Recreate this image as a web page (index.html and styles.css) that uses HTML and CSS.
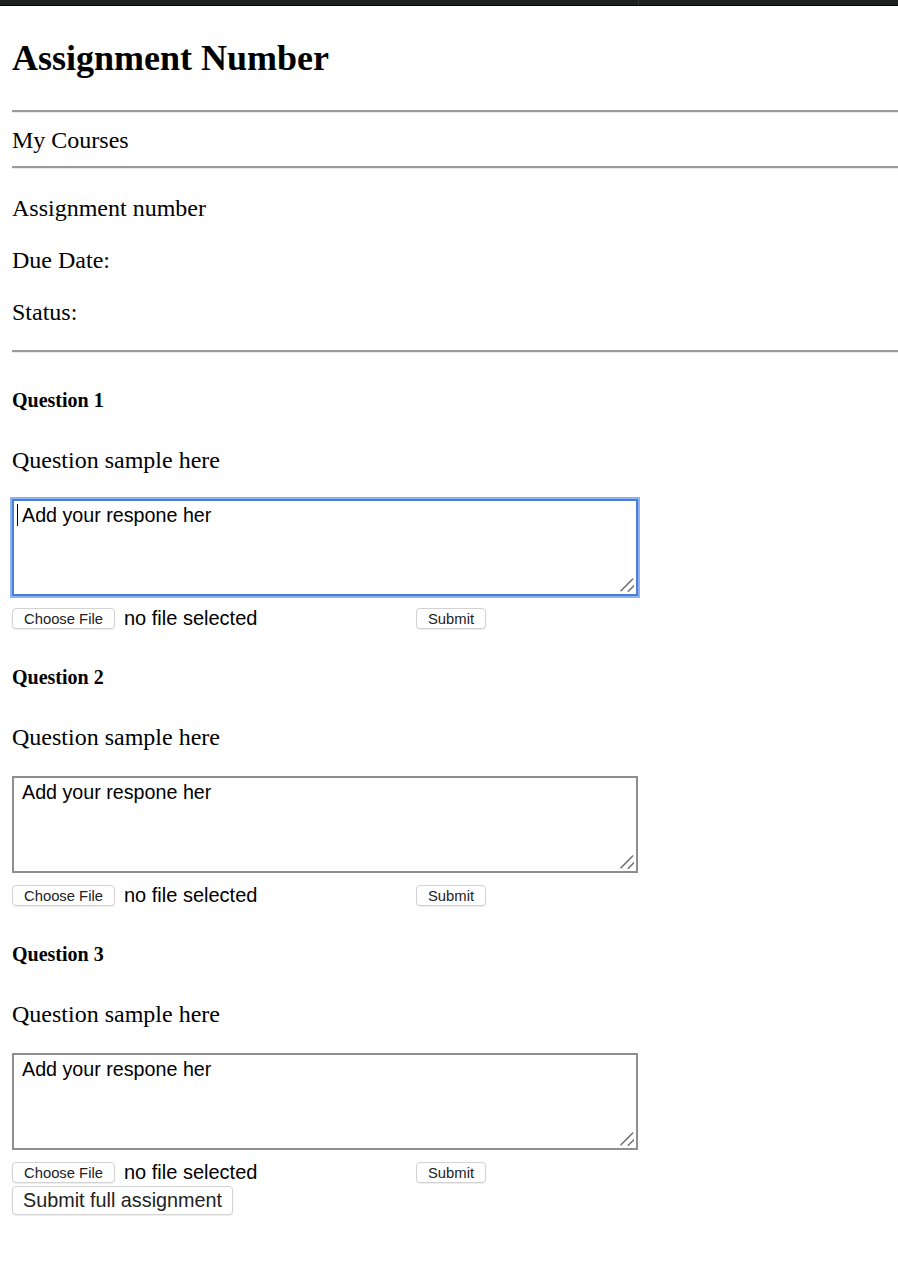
FILE: index.html
```html
<!DOCTYPE html>
<html lang="en">
<head>
<meta charset="utf-8">
<title>Assignment Number</title>
<link rel="stylesheet" href="styles.css">
</head>
<body>
<div class="topbar"><div class="topbar-left"></div><div class="topbar-right"></div></div>
<main class="page">
  <h1 class="title">Assignment Number</h1>
  <hr class="rule rule-top">
  <p class="nav">My Courses</p>
  <hr class="rule rule-mid">
  <div class="meta-list">
    <p class="meta">Assignment number</p>
    <p class="meta">Due Date:</p>
    <p class="meta">Status:</p>
  </div>
  <hr class="rule rule-bottom">

  <section class="question">
    <h4 class="q-title">Question 1</h4>
    <p class="q-text">Question sample here</p>
    <div class="response-wrap">
      <textarea class="response response-focused">Add your respone her</textarea>
      <span class="caret"></span>
      <svg class="grabber" viewBox="0 0 14 14" width="14" height="14" aria-hidden="true"><path d="M12.7 1 L1 12.7 M14 7.7 L8.3 13.3"/></svg>
    </div>
    <div class="upload-row">
      <div class="file-field"><button class="btn-small" type="button">Choose File</button><span class="file-status">no file selected</span></div>
      <button class="btn-small" type="button">Submit</button>
    </div>
  </section>

  <section class="question">
    <h4 class="q-title">Question 2</h4>
    <p class="q-text">Question sample here</p>
    <div class="response-wrap">
      <textarea class="response">Add your respone her</textarea>
      <svg class="grabber" viewBox="0 0 14 14" width="14" height="14" aria-hidden="true"><path d="M12.7 1 L1 12.7 M14 7.7 L8.3 13.3"/></svg>
    </div>
    <div class="upload-row">
      <div class="file-field"><button class="btn-small" type="button">Choose File</button><span class="file-status">no file selected</span></div>
      <button class="btn-small" type="button">Submit</button>
    </div>
  </section>

  <section class="question">
    <h4 class="q-title">Question 3</h4>
    <p class="q-text">Question sample here</p>
    <div class="response-wrap">
      <textarea class="response">Add your respone her</textarea>
      <svg class="grabber" viewBox="0 0 14 14" width="14" height="14" aria-hidden="true"><path d="M12.7 1 L1 12.7 M14 7.7 L8.3 13.3"/></svg>
    </div>
    <div class="upload-row">
      <div class="file-field"><button class="btn-small" type="button">Choose File</button><span class="file-status">no file selected</span></div>
      <button class="btn-small" type="button">Submit</button>
    </div>
  </section>

  <button class="final-btn" type="button">Submit full assignment</button>
</main>
</body>
</html>
```

FILE: styles.css
```css
html, body {
  margin: 0;
  padding: 0;
  background: #ffffff;
}

body {
  color: #000;
  font-family: "Liberation Serif", "Times New Roman", serif;
}

.topbar {
  display: flex;
  height: 5px;
  background: #1f2020;
  border-bottom: 1px solid #050505;
}

.topbar-left {
  width: 638px;
  border-right: 1px solid #3a3a3a;
}

.topbar-right {
  flex: 1;
}

.page {
  padding: 0 0 40px 12px;
}

.title {
  margin: 32px 0 0;
  font-size: 36px;
  line-height: 40px;
  font-weight: bold;
}

.rule {
  display: block;
  height: 0;
  margin: 0;
  border: 0;
  border-top: 2px solid #9b9b9b;
  border-bottom: 1px solid #ececec;
}

.rule-top { margin-top: 32px; }
.rule-mid { margin-top: 12px; }
.rule-bottom { margin-top: 24px; }

.nav {
  margin: 13px 0 0;
  font-size: 24px;
  line-height: 28px;
}

.meta-list {
  display: flex;
  flex-direction: column;
  gap: 24px;
  margin-top: 25px;
}

.meta {
  margin: 0;
  font-size: 24px;
  line-height: 28px;
}

.question {
  margin-top: 36px;
}

.rule-bottom + .question {
  margin-top: 35px;
}

.q-title {
  margin: 0;
  font-size: 20px;
  line-height: 24px;
  font-weight: bold;
}

.q-text {
  margin: 34px 0 0;
  font-size: 24px;
  line-height: 28px;
}

.response-wrap {
  position: relative;
  width: 626px;
  margin-top: 25px;
}

.response {
  display: block;
  box-sizing: border-box;
  width: 626px;
  height: 97px;
  margin: 0;
  padding: 3px 8px;
  border: 2px solid #8e8e8e;
  border-radius: 0;
  background: #fff;
  color: #000;
  font-family: "Liberation Sans", Arial, sans-serif;
  font-size: 19.7px;
  line-height: 22px;
  outline: none;
  resize: none;
}

.response-focused {
  border-color: #4a7ed8;
  box-shadow: 0 0 0 2px #8cb2f3;
}

.caret {
  position: absolute;
  left: 5px;
  top: 5px;
  width: 1px;
  height: 22px;
  background: #000;
}

.grabber {
  position: absolute;
  right: 4px;
  bottom: 4px;
  fill: none;
  stroke: #707070;
  stroke-width: 1.6;
  stroke-linecap: round;
}

.upload-row {
  display: flex;
  align-items: center;
  height: 22px;
  margin-top: 11px;
}

.file-field {
  display: flex;
  align-items: center;
  gap: 9px;
  width: 404px;
}

.btn-small {
  box-sizing: border-box;
  height: 21px;
  margin: 0;
  padding: 2px 11px 0;
  border: 1px solid #d2d2d2;
  border-radius: 4px;
  background: #ffffff;
  box-shadow: 0 1px 1px rgba(0, 0, 0, 0.08);
  color: #222;
  font-family: "Liberation Sans", Arial, sans-serif;
  font-size: 14.8px;
  line-height: 16px;
}

.file-status {
  font-family: "Liberation Sans", Arial, sans-serif;
  font-size: 20px;
  line-height: 22px;
  color: #000;
}

.final-btn {
  display: block;
  box-sizing: border-box;
  height: 29px;
  margin: 3px 0 0;
  padding: 2px 10px;
  border: 1px solid #d2d2d2;
  border-radius: 4px;
  background: #ffffff;
  box-shadow: 0 1px 1px rgba(0, 0, 0, 0.08);
  color: #222;
  font-family: "Liberation Sans", Arial, sans-serif;
  font-size: 19.8px;
  line-height: 23px;
}
```
